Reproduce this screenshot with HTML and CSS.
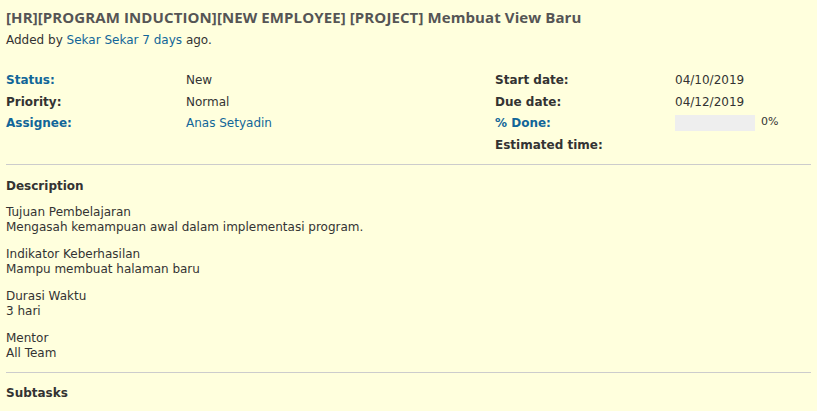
FILE: index.html
```html
<!DOCTYPE html>
<html>
<head>
<meta charset="utf-8">
<link rel="stylesheet" href="styles.css">
</head>
<body>
<div class="issue">
  <h3 class="subject">[HR][PROGRAM INDUCTION][NEW EMPLOYEE] [PROJECT] Membuat View Baru</h3>
  <p class="author">Added by <a href="#">Sekar Sekar</a> <a href="#">7 days</a> ago.</p>
  <div class="attributes">
    <div class="label link">Status:</div><div class="value">New</div>
    <div class="label">Start date:</div><div class="value">04/10/2019</div>
    <div class="label">Priority:</div><div class="value">Normal</div>
    <div class="label">Due date:</div><div class="value">04/12/2019</div>
    <div class="label link">Assignee:</div><div class="value"><a href="#">Anas Setyadin</a></div>
    <div class="label link">% Done:</div><div class="value progress-cell"><span class="progress"></span><span class="pct">0%</span></div>
    <div class="label"></div><div class="value"></div>
    <div class="label">Estimated time:</div><div class="value"></div>
  </div>
  <hr class="sep-attr">
  <div class="section">
    <p class="heading">Description</p>
    <div class="wiki">
      <p>Tujuan Pembelajaran<br>Mengasah kemampuan awal dalam implementasi program.</p>
      <p>Indikator Keberhasilan<br>Mampu membuat halaman baru</p>
      <p>Durasi Waktu<br>3 hari</p>
      <p>Mentor<br>All Team</p>
    </div>
  </div>
  <hr class="sep-desc">
  <div class="section">
    <p class="heading">Subtasks</p>
  </div>
</div>
</body>
</html>
```
FILE: styles.css
```css
html, body {
  margin: 0;
  padding: 0;
  background: #ffffdd;
}
body {
  font-family: "DejaVu Sans", Verdana, sans-serif;
  font-size: 12px;
  color: #333;
}
a {
  color: #116699;
  text-decoration: none;
}
.issue {
  padding: 6px 6px;
}
.subject {
  font-family: "Open Sans", "DejaVu Sans", sans-serif;
  font-size: 15px;
  letter-spacing: 0.1px;
  font-weight: bold;
  color: #555;
  margin: 0;
  line-height: 22px;
}
.author {
  margin: 2px 0 0 0;
  line-height: 20px;
}
.attributes {
  margin-top: 19px;
  display: grid;
  grid-template-columns: 180px 309px 180px 1fr;
  grid-auto-rows: 21.7px;
  align-items: center;
}
.label {
  font-weight: bold;
  color: #333;
}
.label.link {
  color: #116699;
}
.progress-cell {
  display: flex;
  align-items: center;
}
.progress {
  display: inline-block;
  width: 80px;
  height: 16px;
  background: #eeeeee;
}
.pct {
  font-size: 11px;
  margin-left: 6px;
  margin-top: -4px;
}
hr {
  border: 0;
  border-top: 1px solid #cccccc;
  height: 0;
}
.sep-attr {
  margin: 8px 0 11px 0;
}
.sep-desc {
  margin: 10px 0 10px 0;
}
.heading {
  font-weight: bold;
  margin: 0;
  line-height: 20px;
}
.wiki p {
  margin: 11px 0 0 0;
  line-height: 15.5px;
}
.wiki p:first-child {
  margin-top: 9px;
}
```
